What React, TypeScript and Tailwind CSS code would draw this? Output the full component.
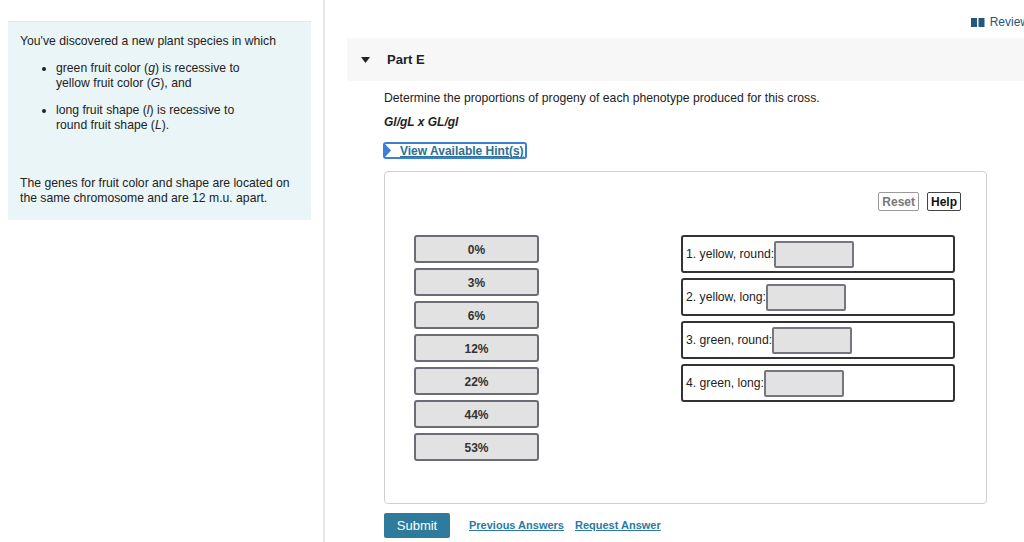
import React from 'react';

const percents = ['0%', '3%', '6%', '12%', '22%', '44%', '53%'];
const targets = ['1. yellow, round:', '2. yellow, long:', '3. green, round:', '4. green, long:'];

export default function App() {
  return (
    <div className="flex h-[542px] w-[1024px] overflow-hidden bg-white text-[#333] font-['Liberation_Sans',Arial,sans-serif]">
      <aside className="w-[325px] shrink-0 border-r-2 border-[#e1e6ec] pl-2 pr-[12px] pt-[21px]">
        <div className="border-t border-[#e3e7ea] bg-[#eaf5f8] px-3 pt-[12px] pb-[14px] text-[12.2px] leading-[15px] text-[#222]">
          <p>You've discovered a new plant species in which</p>
          <ul className="mt-[12px] ml-[24px] list-disc pl-[12px]">
            <li>
              green fruit color (<i>g</i>) is recessive to
              <br />
              yellow fruit color (<i>G</i>), and
            </li>
            <li className="mt-[12px]">
              long fruit shape (<i>l</i>) is recessive to
              <br />
              round fruit shape (<i>L</i>).
            </li>
          </ul>
          <p className="mt-[43px]">
            The genes for fruit color and shape are located on
            <br />
            the same chromosome and are 12 m.u. apart.
          </p>
        </div>
      </aside>

      <main className="flex-1 pl-[22px]">
        <div className="flex h-[38px] items-center justify-end gap-[5px] whitespace-nowrap pt-[6px] text-[12px] text-[#24587a]">
          <svg width="14" height="9" viewBox="0 0 14 9" className="shrink-0">
            <rect x="0" y="0" width="6" height="9" fill="#24587a" />
            <rect x="7.5" y="0" width="6" height="9" fill="#24587a" />
          </svg>
          <span className="-mr-[5px]">Review</span>
        </div>

        <div className="flex h-[43px] items-center bg-[#f7f7f7] pl-[14px] text-[13px] font-bold text-[#222]">
          <svg width="9" height="6" viewBox="0 0 9 6" className="mr-[17px]">
            <polygon points="0,0 9,0 4.5,6" fill="#222" />
          </svg>
          Part E
        </div>

        <div className="pl-[37px]">
          <p className="mt-[10px] text-[12.2px] leading-[15px] text-[#222]">
            Determine the proportions of progeny of each phenotype produced for this cross.
          </p>
          <p className="mt-[9px] text-[12px] font-bold italic leading-[15px] text-[#222]">Gl/gL x GL/gl</p>
          <button className="mt-[12px] -ml-[1px] flex h-[17px] items-center rounded-[3px] border-2 border-[#3b7fd6] pr-[1px] text-[12px] font-bold text-[#2a6f95]">
            <svg width="6" height="13" viewBox="0 0 6 13" className="mr-[9px]">
              <polygon points="0,0 6,6.5 0,13" fill="#3b7fd6" />
            </svg>
            <span className="underline">View Available Hint(s)</span>
          </button>

          <div className="mt-[12px] h-[333px] w-[603px] rounded-[4px] border border-[#cfcfcf] px-[29px] pt-[20px]">
            <div className="flex justify-end gap-[8px] mr-[-4px]">
              <button className="h-[19px] rounded-[2px] border border-[#9a9a9a] px-[3px] text-[12px] font-bold text-[#777]">Reset</button>
              <button className="h-[19px] rounded-[2px] border border-[#444] px-[3px] text-[12px] font-bold text-[#111]">Help</button>
            </div>

            <div className="mt-[24px] flex gap-[142px]">
              <div className="flex flex-col gap-[5px]">
                {percents.map((p) => (
                  <div
                    key={p}
                    className="flex h-[28px] w-[125px] items-start justify-center rounded-[3px] border-2 border-[#6c6c76] bg-[#e2e2e2] pt-[4px] text-[12px] font-bold text-[#333]"
                  >
                    {p}
                  </div>
                ))}
              </div>
              <div className="flex flex-col gap-[5px]">
                {targets.map((t) => (
                  <div
                    key={t}
                    className="flex h-[38px] w-[274px] items-center rounded-[3px] border-2 border-[#333] pl-[3px] text-[12.2px] text-[#222]"
                  >
                    <span>{t}</span>
                    <span className="h-[27px] w-[80px] rounded-[2px] border-2 border-[#76767e] bg-[#e2e2e2]" />
                  </div>
                ))}
              </div>
            </div>
          </div>

          <div className="mt-[9px] flex items-center">
            <button className="h-[25px] w-[66px] rounded-[2px] bg-[#2e7b9b] text-[13px] text-white">Submit</button>
            <a className="ml-[19px] text-[11px] font-bold text-[#2a7aa3] underline">Previous Answers</a>
            <a className="ml-[11px] text-[11px] font-bold text-[#2a7aa3] underline">Request Answer</a>
          </div>
        </div>
      </main>
    </div>
  );
}
